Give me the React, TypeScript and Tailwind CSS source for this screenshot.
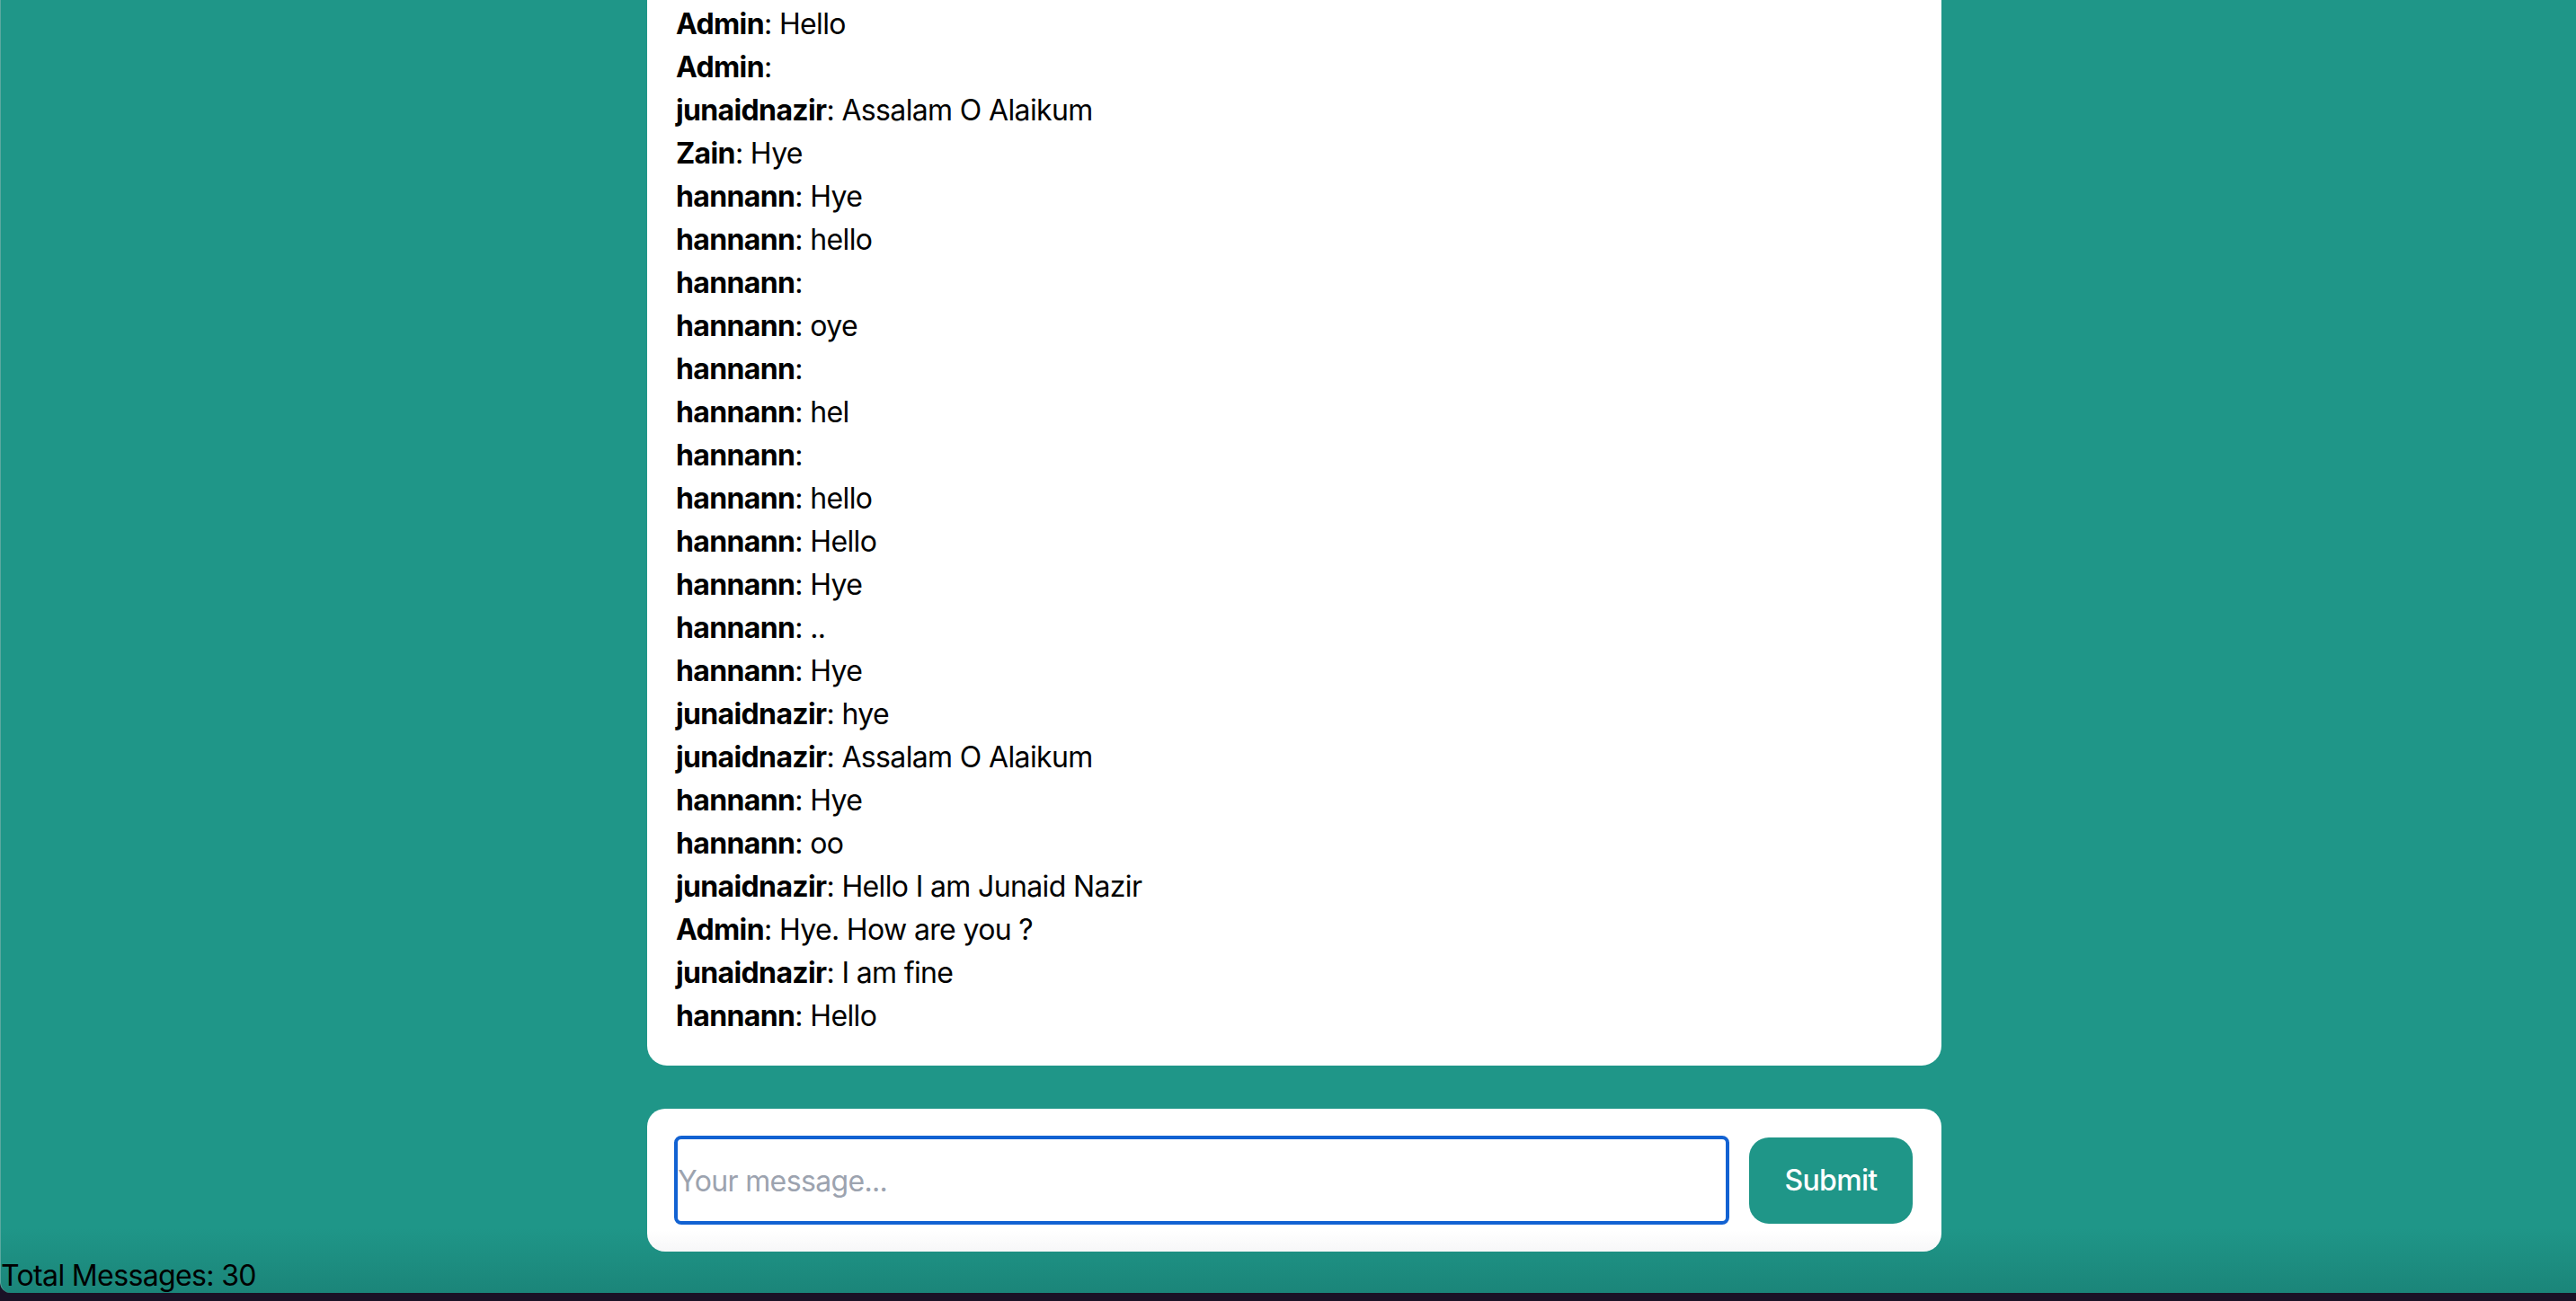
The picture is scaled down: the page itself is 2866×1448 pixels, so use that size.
const messages: [string, string][] = [
  ['Admin', 'Hello'],
  ['Admin', ''],
  ['junaidnazir', 'Assalam O Alaikum'],
  ['Zain', 'Hye'],
  ['hannann', 'Hye'],
  ['hannann', 'hello'],
  ['hannann', ''],
  ['hannann', 'oye'],
  ['hannann', ''],
  ['hannann', 'hel'],
  ['hannann', ''],
  ['hannann', 'hello'],
  ['hannann', 'Hello'],
  ['hannann', 'Hye'],
  ['hannann', '..'],
  ['hannann', 'Hye'],
  ['junaidnazir', 'hye'],
  ['junaidnazir', 'Assalam O Alaikum'],
  ['hannann', 'Hye'],
  ['hannann', 'oo'],
  ['junaidnazir', 'Hello I am Junaid Nazir'],
  ['Admin', 'Hye. How are you ?'],
  ['junaidnazir', 'I am fine'],
  ['hannann', 'Hello'],
];

export default function App() {
  return (
    <div className="flex h-[1448px] w-full flex-col overflow-hidden bg-[#1a1226] font-['Inter',sans-serif] text-[32px] leading-[48px] tracking-[-0.02em] text-black">
      <div className="h-[1439px] overflow-hidden rounded-bl-[12px] border-l border-[#5aa89f] bg-[linear-gradient(to_bottom,#1f9688_95%,#1b8579)]">
        <div className="ml-[719px] w-[1440px]">
          {/* Messages */}
          <div className="rounded-b-[22px] bg-white pb-[31px] pl-[32px] pt-[3px]">
            {messages.map(([user, text], i) => (
              <div key={i}>
                <span className="font-bold">{user}</span>: {text}
              </div>
            ))}
          </div>

          {/* Form */}
          <form
            className="mt-[48px] flex h-[159px] items-center gap-[22px] rounded-[20px] bg-[linear-gradient(to_bottom,#ffffff_85%,#f7f7f8)] pl-[30px] pr-[32px]"
            onSubmit={(e) => e.preventDefault()}
          >
            <input
              type="text"
              placeholder="Your message..."
              className="h-[99px] flex-1 rounded-[8px] border-[4px] border-[#1262d2] bg-white px-0 pt-[2px] text-[32px] tracking-[-0.02em] outline-none placeholder:text-[#9ca3af]"
            />
            <button
              type="submit"
              className="h-[96px] w-[182px] rounded-[22px] bg-[#1f9688] text-[32px] font-medium text-white"
            >
              Submit
            </button>
          </form>
        </div>

        <p className="pt-[3px]">Total Messages: 30</p>
      </div>
      <div className="h-[9px]" />
    </div>
  );
}
